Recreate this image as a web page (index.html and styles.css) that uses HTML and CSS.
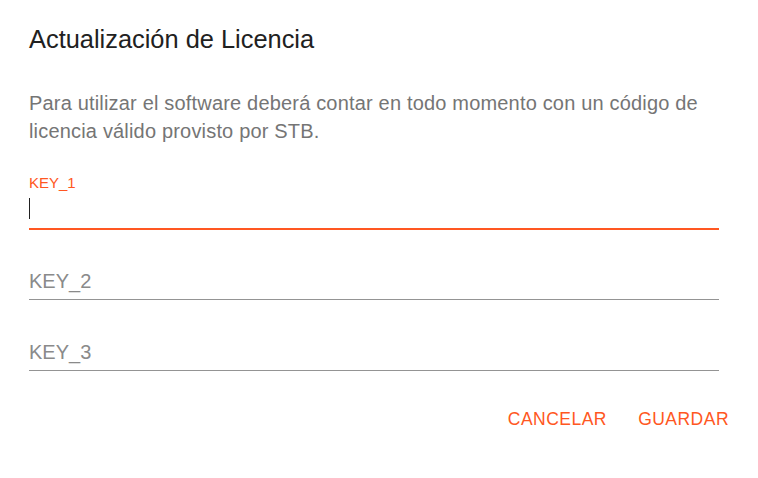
FILE: index.html
```html
<!DOCTYPE html>
<html lang="es">
<head>
    <meta charset="UTF-8">
    <meta name="viewport" content="width=device-width, initial-scale=1.0">
    <title>Actualización de Licencia</title>
    <link rel="stylesheet" href="styles.css">
</head>
<body>

<!-- Diálogo de licencia -->
<div class="dialog">
    <h2 class="dialog-title">Actualización de Licencia</h2>

    <div class="dialog-content">
        <p class="dialog-text">Para utilizar el software deberá contar en todo momento con un código de licencia válido provisto por STB.</p>

        <div class="field focused">
            <label for="key1">KEY_1</label>
            <input id="key1" type="text">
            <span class="caret"></span>
        </div>
        <div class="field">
            <label for="key2" class="idle">KEY_2</label>
            <input id="key2" type="text">
        </div>
        <div class="field">
            <label for="key3" class="idle">KEY_3</label>
            <input id="key3" type="text">
        </div>
    </div>

    <div class="dialog-actions">
        <button class="text-button">Cancelar</button>
        <button class="text-button">Guardar</button>
    </div>
</div>

</body>
</html>
```

FILE: styles.css
```css
body {
    margin: 0;
    padding: 0;
    background: #ffffff;
    font-family: 'Liberation Sans', Arial, sans-serif;
}

.dialog {
    width: 758px;
    height: 478px;
    box-sizing: border-box;
    background: #ffffff;
}

.dialog-title {
    margin: 0;
    padding: 20px 39px 0 29px;
    font-size: 25.4px;
    font-weight: 500;
    line-height: 38px;
    color: #212121;
}

.dialog-content {
    padding: 0 39px 0 29px;
}

.dialog-text {
    margin: 31.4px 0 0;
    font-size: 20px;
    line-height: 28px;
    letter-spacing: 0.18px;
    color: #757575;
}

/* Champs de texte */
.field {
    position: relative;
    padding-top: 17px;
    margin-top: 15px;
}
.field.focused {
    margin-top: 29px;
}
.field label {
    position: absolute;
    left: 0;
    top: 0;
    font-size: 15px;
    line-height: 17px;
    color: #ff5722;
    pointer-events: none;
}
.field label.idle {
    top: 25.4px;
    font-size: 20px;
    line-height: 23px;
    color: #8a8a8a;
}
.field input {
    display: block;
    width: 100%;
    box-sizing: border-box;
    height: 38.5px;
    margin: 0;
    padding: 7px 0 7.5px;
    border: none;
    border-bottom: 1px solid #949494;
    outline: none;
    background: transparent;
    font-family: inherit;
    font-size: 20px;
    line-height: 23px;
    color: #212121;
}
.field.focused input {
    border-bottom: 2px solid #ff5722;
    padding-bottom: 6.5px;
}
.caret {
    position: absolute;
    left: 0;
    top: 23.5px;
    width: 1px;
    height: 21px;
    background: #212121;
}

/* Boutons */
.dialog-actions {
    display: flex;
    justify-content: flex-end;
    gap: 12px;
    padding: 27.5px 19.4px 0 0;
}
.text-button {
    min-width: 77px;
    padding: 7px 9.6px;
    border: none;
    background: transparent;
    font-family: inherit;
    font-size: 17.5px;
    font-weight: 500;
    line-height: 29.4px;
    letter-spacing: 0.48px;
    text-transform: uppercase;
    color: #ff5722;
    cursor: pointer;
}
```
